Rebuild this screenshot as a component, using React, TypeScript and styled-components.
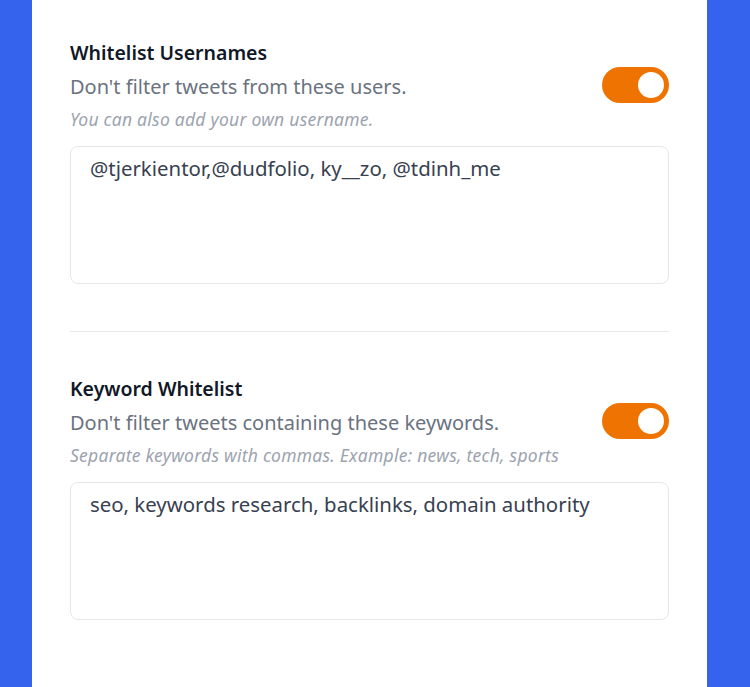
import React from "react"
import styled, { createGlobalStyle } from "styled-components"

const GlobalStyle = createGlobalStyle`
  html, body {
    margin: 0;
    padding: 0;
    background: #3563ee;
    font-family: "Noto Sans", "Open Sans", Arial, sans-serif;
  }
  * { box-sizing: border-box; }
`

interface Filter {
  id: string
  title: string
  description: string
  hint: string
  value: string
  enabled: boolean
}

const filters: Filter[] = [
  {
    id: "users",
    title: "Whitelist Usernames",
    description: "Don't filter tweets from these users.",
    hint: "You can also add your own username.",
    value: "@tjerkientor,@dudfolio, ky__zo, @tdinh_me",
    enabled: true,
  },
  {
    id: "keywords",
    title: "Keyword Whitelist",
    description: "Don't filter tweets containing these keywords.",
    hint: "Separate keywords with commas. Example: news, tech, sports",
    value: "seo, keywords research, backlinks, domain authority",
    enabled: true,
  },
]

const Toggle: React.FC<{ on: boolean }> = ({ on }) => (
  <S.Switch on={on} role="switch" aria-checked={on}>
    <S.Knob />
  </S.Switch>
)

export default function App() {
  return (
    <>
      <GlobalStyle />
      <S.Page>
        <S.Panel>
          {filters.map((f, i) => (
            <React.Fragment key={f.id}>
              {i > 0 && <S.Divider />}
              <S.Section>
                <S.Header>
                  <S.TextBlock>
                    <S.Title>{f.title}</S.Title>
                    <S.Description>{f.description}</S.Description>
                    <S.Hint>{f.hint}</S.Hint>
                  </S.TextBlock>
                  <Toggle on={f.enabled} />
                </S.Header>
                <S.Input defaultValue={f.value} spellCheck={false} />
              </S.Section>
            </React.Fragment>
          ))}
        </S.Panel>
      </S.Page>
    </>
  )
}

const S = {
  Page: styled.div`
    min-height: 687px;
    padding: 0 43px 0 32px;
    display: flex;
  `,
  Panel: styled.div`
    flex: 1;
    background: #fff;
    padding: 40px 38px 68px 38px;
    display: flex;
    flex-direction: column;
  `,
  Section: styled.section`
    display: flex;
    flex-direction: column;
  `,
  Header: styled.div`
    display: flex;
    align-items: center;
    justify-content: space-between;
  `,
  TextBlock: styled.div`
    display: flex;
    flex-direction: column;
  `,
  Title: styled.h3`
    margin: 0;
    font-size: 19.5px;
    line-height: 26px;
    font-weight: 600;
    color: #111827;
  `,
  Description: styled.p`
    margin: 7px 0 0;
    font-size: 20px;
    line-height: 28px;
    color: #6b7280;
  `,
  Hint: styled.p`
    margin: 8px 0 0;
    font-size: 17.5px;
    letter-spacing: 0.25px;
    line-height: 20px;
    font-style: italic;
    color: #9ca3af;
  `,
  Switch: styled.div<{ on: boolean }>`
    width: 67px;
    height: 36px;
    border-radius: 18px;
    background: ${({ on }) => (on ? "#ef7300" : "#d1d5db")};
    display: flex;
    align-items: center;
    justify-content: ${({ on }) => (on ? "flex-end" : "flex-start")};
    padding: 0 5px;
    flex-shrink: 0;
  `,
  Knob: styled.div`
    width: 26px;
    height: 26px;
    border-radius: 50%;
    background: #fff;
  `,
  Input: styled.textarea`
    margin-top: 17px;
    height: 138px;
    width: 100%;
    resize: none;
    border: 1px solid #e5e7eb;
    border-radius: 8px;
    padding: 7px 19px;
    font-family: "Noto Sans", "Open Sans", Arial, sans-serif;
    font-size: 20.4px;
    line-height: 28px;
    color: #374151;
    outline: none;
  `,
  Divider: styled.hr`
    margin: 47px 0 44px;
    border: 0;
    border-top: 1px solid #e5e7eb;
  `,
}
